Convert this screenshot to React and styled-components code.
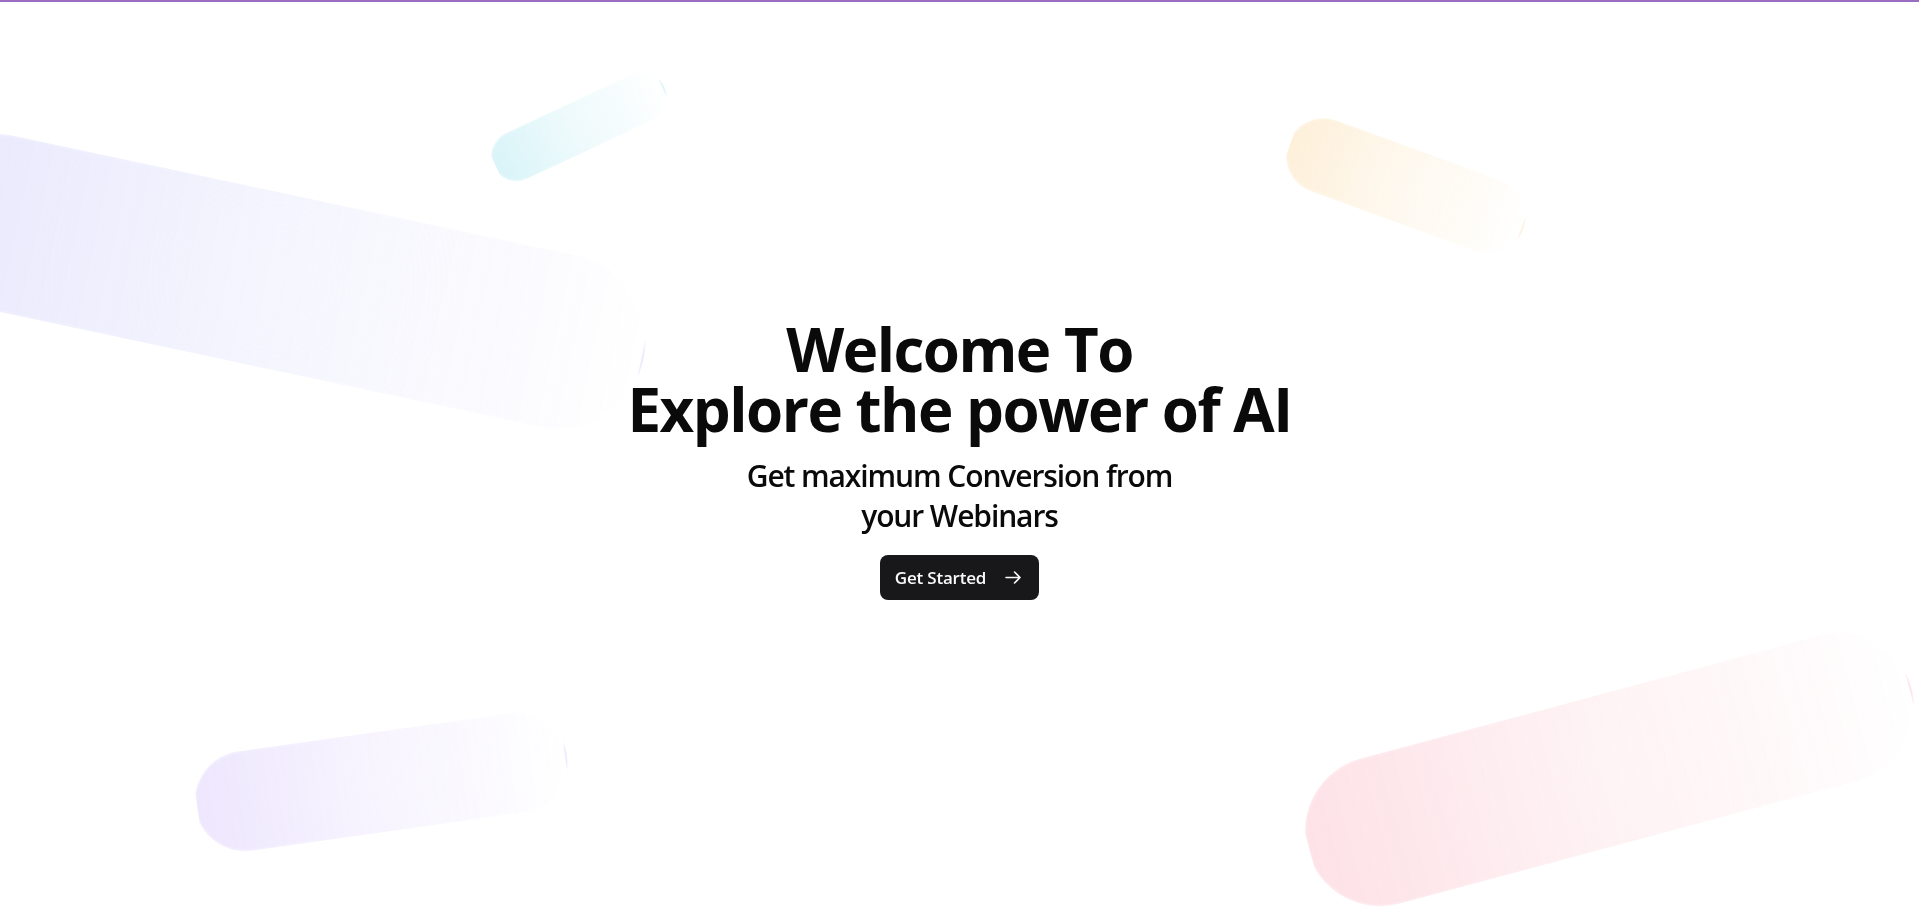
import React from "react";
import styled, { createGlobalStyle } from "styled-components";

const GlobalStyle = createGlobalStyle`
  html, body {
    margin: 0;
    padding: 0;
    background: #ffffff;
  }
  *, *::before, *::after { box-sizing: border-box; }
  body {
    font-family: "Open Sans", "Noto Sans", sans-serif;
    -webkit-font-smoothing: antialiased;
  }
`;

const Page = styled.div`
  position: relative;
  min-height: 100vh;
  width: 100%;
  overflow: hidden;
  background: #ffffff;
  display: flex;
  flex-direction: column;
`;

const TopBar = styled.div`
  flex: none;
  height: 2px;
  background: #9a6dc0;
  position: relative;
  z-index: 2;
`;

const ShapeLayer = styled.div`
  position: absolute;
  inset: 0;
  overflow: hidden;
  pointer-events: none;
`;

const ShapeAnchor = styled.div`
  position: absolute;
  left: ${(p) => p.$left ?? "auto"};
  right: ${(p) => p.$right ?? "auto"};
  top: ${(p) => p.$top ?? "auto"};
  bottom: ${(p) => p.$bottom ?? "auto"};
  transform: rotate(${(p) => p.$rotate}deg);
`;

const ShapeBody = styled.div`
  position: relative;
  width: ${(p) => p.$w}px;
  height: ${(p) => p.$h}px;
  transform: translateY(12px);
`;

const ShapeFill = styled.div`
  position: absolute;
  inset: 0;
  border-radius: 9999px;
  background-image: linear-gradient(to right, ${(p) => p.$color}, transparent);
  border: 2.5px solid rgba(255, 255, 255, 0.15);
  box-shadow: 0 10px 40px 0 rgba(255, 255, 255, 0.1);
  backdrop-filter: blur(2.5px);

  &::after {
    content: "";
    position: absolute;
    inset: 0;
    border-radius: 9999px;
    background: radial-gradient(circle at 50% 50%, rgba(255, 255, 255, 0.2), transparent 70%);
  }
`;

const Hero = styled.main`
  position: relative;
  z-index: 1;
  flex: 1;
  display: flex;
  align-items: center;
  justify-content: center;
  padding-top: 6px;
`;

const Content = styled.div`
  display: flex;
  flex-direction: column;
  align-items: center;
  text-align: center;
`;

const Title = styled.h1`
  margin: 0 0 17px;
  font-size: 60px;
  line-height: 60px;
  font-weight: 700;
  letter-spacing: -1.5px;
  color: #0a0a0a;
`;

const Subtitle = styled.p`
  margin: 0 0 19px;
  font-size: 30px;
  line-height: 40px;
  font-weight: 600;
  letter-spacing: -1.1px;
  color: #0a0a0a;
`;

const CtaButton = styled.button`
  display: inline-flex;
  align-items: center;
  gap: 19px;
  height: 45px;
  padding: 0 18px 0 15px;
  border: none;
  border-radius: 8px;
  background: #18181b;
  color: #fafafa;
  font-family: inherit;
  font-size: 17px;
  font-weight: 600;
  letter-spacing: -0.2px;
  cursor: pointer;
`;

const ArrowIcon = () => (
  <svg width="16" height="13" viewBox="0 0 16 13" fill="none" aria-hidden="true">
    <path
      d="M1 6.5H15M9.5 1L15 6.5L9.5 12"
      stroke="#fafafa"
      strokeWidth="1.6"
      strokeLinecap="round"
      strokeLinejoin="round"
    />
  </svg>
);

const shapes = [
  { w: 750, h: 175, rotate: 12, color: "rgba(99, 102, 241, 0.15)", left: "-5%", top: "20%" },
  { w: 625, h: 150, rotate: -15, color: "rgba(244, 63, 94, 0.15)", right: "0%", top: "75%" },
  { w: 375, h: 100, rotate: -8, color: "rgba(139, 92, 246, 0.15)", left: "10%", bottom: "10%" },
  { w: 250, h: 75, rotate: 20, color: "rgba(245, 158, 11, 0.15)", right: "20%", top: "15%" },
  { w: 187.5, h: 50, rotate: -25, color: "rgba(6, 182, 212, 0.15)", left: "25%", top: "10%" },
];

export default function App() {
  return (
    <>
      <GlobalStyle />
      <Page>
        <TopBar />
        <ShapeLayer>
          {shapes.map((s, i) => (
            <ShapeAnchor
              key={i}
              $left={s.left}
              $right={s.right}
              $top={s.top}
              $bottom={s.bottom}
              $rotate={s.rotate}
            >
              <ShapeBody $w={s.w} $h={s.h}>
                <ShapeFill $color={s.color} />
              </ShapeBody>
            </ShapeAnchor>
          ))}
        </ShapeLayer>
        <Hero>
          <Content>
            <Title>
              Welcome To
              <br />
              Explore the power of AI
            </Title>
            <Subtitle>
              Get maximum Conversion from
              <br />
              your Webinars
            </Subtitle>
            <CtaButton type="button">
              <span>Get Started</span>
              <ArrowIcon />
            </CtaButton>
          </Content>
        </Hero>
      </Page>
    </>
  );
}
